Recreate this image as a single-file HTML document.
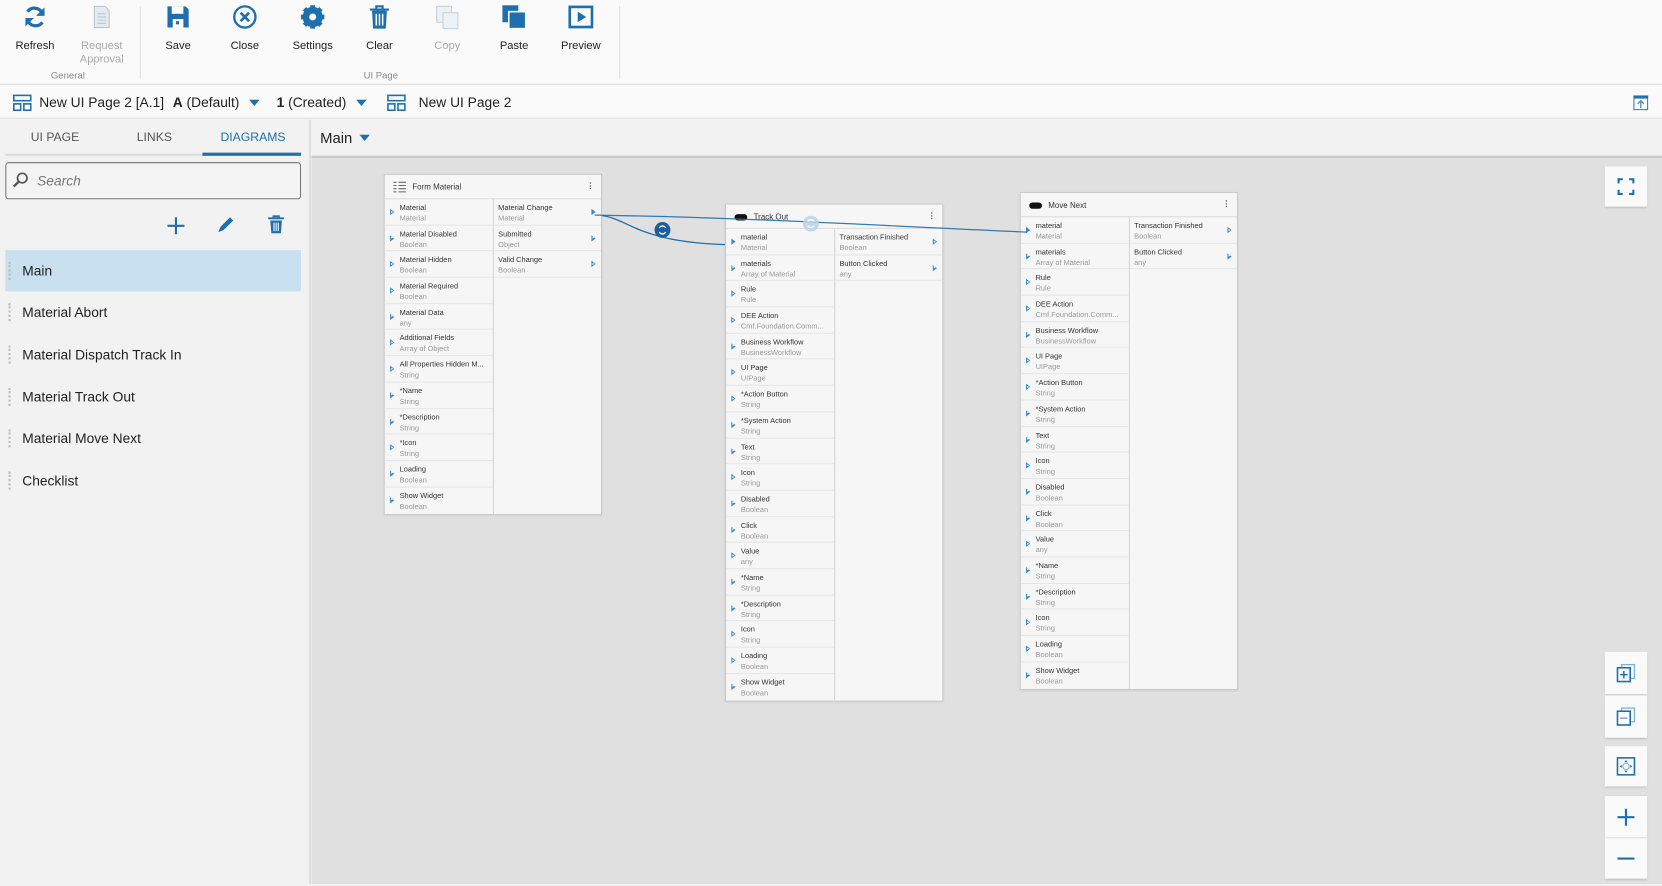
<!DOCTYPE html>
<html><head><meta charset="utf-8"><style>
*{box-sizing:border-box;margin:0;padding:0}
html,body{width:1662px;height:884px;overflow:hidden;background:#f2f2f2;font-family:"Liberation Sans",sans-serif;color:#222}
#s{position:absolute;left:0;top:0;width:1568px;height:834px;transform:scale(1.05995);transform-origin:0 0}
.a{position:absolute}
.tb{left:0;top:0;width:1568px;height:80px;background:#fafafa;border-bottom:1px solid #ddd}
.btn{position:absolute;top:4px;width:60px;text-align:center;font-size:10.5px;color:#222;line-height:13px}
.btn svg{display:block;margin:0 auto 9px;width:24px;height:24px}
.dis{color:#aaa}
.grp{position:absolute;top:66px;font-size:9px;color:#888}
.sep{position:absolute;top:6px;width:1px;height:68px;background:#e0e0e0}
.tl{left:0;top:81px;width:1568px;height:31px;background:#fafafa;border-bottom:1px solid #ddd;font-size:13px}
.tl span{position:absolute;top:8px}
.lp{left:0;top:113px;width:293px;height:721px;background:#f2f2f2;border-right:1px solid #ccc}
.tab{position:absolute;top:11px;font-size:11.5px;color:#555}
.li{position:absolute;left:5px;width:279px;height:39px;font-size:13px;padding:12px 0 0 16px;color:#222}
.li:before{content:"";position:absolute;left:3px;top:11px;width:3px;height:17px;border-left:2px dotted #bbb}
.cv{left:294px;top:147px;width:1274px;height:687px;background:#e0e0e0;border-top:2px solid #c8c8c8}
.node{position:absolute;background:#f6f6f6;border:1px solid #c9c9c9;box-shadow:0 1px 2px rgba(0,0,0,.1);font-size:7px}
.hd{height:23px;border-bottom:1px solid #ddd;position:relative;font-size:7.5px;color:#333;padding:7px 0 0 26px}
.dots{position:absolute;right:6px;top:6px;font-size:8px;font-weight:bold;color:#555}
.col{position:absolute;top:23px;bottom:0}
.lc{left:0;width:103px;border-right:1px solid #d4d4d4}
.rc{left:103px;right:0}
.r{height:24.7px;border-bottom:1px solid #e6e6e6;position:relative;padding:4px 0 0 14px;line-height:10px}
.rc .r{padding-left:4px}
.r b{font-weight:normal;color:#333;display:block;white-space:nowrap;overflow:hidden}
.r i{font-style:normal;color:#999;display:block}
.lc .r:before{content:"";position:absolute;left:5px;top:9px;border-left:4px solid #3a8ccc;border-top:3px solid transparent;border-bottom:3px solid transparent}
.lc .r:after{content:"";position:absolute;left:6px;top:10.5px;border-left:2px solid #f6f6f6;border-top:1.5px solid transparent;border-bottom:1.5px solid transparent}
.lc .r.f:after{display:none}
.rc .r:before{content:"";position:absolute;right:5px;top:9px;border-left:4px solid #3a8ccc;border-top:3px solid transparent;border-bottom:3px solid transparent}
.rc .r:after{content:"";position:absolute;right:6px;top:10.5px;border-left:2px solid #f6f6f6;border-top:1.5px solid transparent;border-bottom:1.5px solid transparent}
.rc .r.f:after{display:none}
.pill{position:absolute;left:8px;top:9px;width:12px;height:6px;border-radius:3px;background:#111}
.cb{position:absolute;width:40px;background:#fafafa;box-shadow:0 1px 2px rgba(0,0,0,.2);display:flex;align-items:center;justify-content:center}
</style></head><body><div id="s">

<div class="a tb">
 <div class="btn" style="left:3px"><svg viewBox="0 0 24 24"><path d="M19 9A8 8 0 0 0 5 7M5 15a8 8 0 0 0 14 2" fill="none" stroke="#1f6fae" stroke-width="3"/><path d="M21 3v8h-8zM3 21v-8h8z" fill="#1f6fae"/></svg>Refresh</div>
 <div class="btn dis" style="left:66px"><svg viewBox="0 0 24 24"><path d="M5 2h10l4 4v16H5z" fill="#e4eaf0" stroke="#b8c6d2"/><path d="M8 9h8M8 12h8M8 15h8M8 18h8" stroke="#b8c6d2"/></svg>Request<br>Approval</div>
 <div class="grp" style="left:48px">General</div>
 <div class="sep" style="left:132px"></div>
 <div class="btn" style="left:138px"><svg viewBox="0 0 24 24"><path d="M2 2h17l3 3v17H2z" fill="#1f6fae"/><rect x="6" y="2" width="11" height="7" fill="#fff"/><rect x="7" y="14" width="10" height="8" fill="#fff"/><rect x="10" y="16" width="3" height="3" fill="#1f6fae"/></svg>Save</div>
 <div class="btn" style="left:201px"><svg viewBox="0 0 24 24"><circle cx="12" cy="12" r="10" fill="none" stroke="#1f6fae" stroke-width="2.2"/><path d="M8 8l8 8M16 8l-8 8" stroke="#1f6fae" stroke-width="2.5"/></svg>Close</div>
 <div class="btn" style="left:265px"><svg viewBox="0 0 24 24"><circle cx="12" cy="12" r="7.5" fill="none" stroke="#1f6fae" stroke-width="4"/><path d="M12 1v22M1 12h22M4.2 4.2l15.6 15.6M19.8 4.2L4.2 19.8" stroke="#1f6fae" stroke-width="4.5"/><circle cx="12" cy="12" r="7" fill="#1f6fae"/><circle cx="12" cy="12" r="3.3" fill="#fafafa"/></svg>Settings</div>
 <div class="btn" style="left:328px"><svg viewBox="0 0 24 24"><path d="M3 5h18M9 5V2h6v3" stroke="#1f6fae" stroke-width="2" fill="none"/><path d="M5 6h14l-1 17H6z" fill="#1f6fae"/><path d="M9 9v11M12 9v11M15 9v11" stroke="#fff" stroke-width="1.4"/></svg>Clear</div>
 <div class="btn dis" style="left:392px"><svg viewBox="0 0 24 24"><rect x="2" y="2" width="14" height="15" fill="#eef2f6" stroke="#c4d0da"/><rect x="8" y="8" width="14" height="15" fill="#eef2f6" stroke="#c4d0da"/></svg>Copy</div>
 <div class="btn" style="left:455px"><svg viewBox="0 0 24 24"><rect x="1" y="1" width="15" height="16" fill="#1f6fae"/><rect x="7" y="7" width="16" height="16" fill="#1f6fae" stroke="#fafafa" stroke-width="1.5"/></svg>Paste</div>
 <div class="btn" style="left:518px"><svg viewBox="0 0 24 24"><rect x="1.5" y="2.5" width="21" height="19" fill="none" stroke="#1f6fae" stroke-width="2.5"/><path d="M9 7v10l8-5z" fill="#1f6fae"/></svg>Preview</div>
 <div class="grp" style="left:343px">UI Page</div>
 <div class="sep" style="left:584px"></div>
</div>

<div class="a tl">
 <svg class="a" style="left:12px;top:8px" width="18" height="16" viewBox="0 0 18 16"><rect x="1" y="1" width="16" height="5" fill="none" stroke="#1f6fae" stroke-width="1.5"/><rect x="1" y="9" width="6.5" height="6" fill="none" stroke="#1f6fae" stroke-width="1.5"/><rect x="10.5" y="9" width="6.5" height="6" fill="none" stroke="#1f6fae" stroke-width="1.5"/></svg>
 <span style="left:37px">New UI Page 2 [A.1]</span>
 <span style="left:163px"><b>A</b> (Default)</span>
 <svg class="a" style="left:235px;top:13px" width="10" height="6"><path d="M0 0h10L5 6z" fill="#1f6fae"/></svg>
 <span style="left:261px"><b>1</b> (Created)</span>
 <svg class="a" style="left:336px;top:13px" width="10" height="6"><path d="M0 0h10L5 6z" fill="#1f6fae"/></svg>
 <svg class="a" style="left:365px;top:8px" width="18" height="16" viewBox="0 0 18 16"><rect x="1" y="1" width="16" height="5" fill="none" stroke="#1f6fae" stroke-width="1.5"/><rect x="1" y="9" width="6.5" height="6" fill="none" stroke="#1f6fae" stroke-width="1.5"/><rect x="10.5" y="9" width="6.5" height="6" fill="none" stroke="#1f6fae" stroke-width="1.5"/></svg>
 <span style="left:395px">New UI Page 2</span>
 <svg class="a" style="left:1541px;top:9px" width="14" height="14"><rect x=".5" y=".5" width="13" height="13" fill="#fff" stroke="#1f6fae"/><rect x="0" y="0" width="14" height="3" fill="#1f6fae"/><path d="M7 5v7M4 8l3-3 3 3" stroke="#4a90d0" fill="none" stroke-width="1.3"/></svg>
</div>

<div class="a lp">
 <div class="tab" style="left:29px">UI PAGE</div>
 <div class="tab" style="left:129px">LINKS</div>
 <div class="tab" style="left:208px;color:#1f6fae">DIAGRAMS</div>
 <div class="a" style="left:5px;top:32px;width:279px;height:2px;background:#ddd"></div>
 <div class="a" style="left:191px;top:31px;width:93px;height:3px;background:#1f6fae"></div>
 <div class="a" style="left:5px;top:40px;width:279px;height:35px;border:1px solid #777;border-radius:3px;background:#f4f4f4"></div>
 <svg class="a" style="left:11px;top:49px" width="16" height="16"><circle cx="10" cy="6" r="4.5" fill="none" stroke="#555" stroke-width="1.6"/><path d="M7 9l-5 5" stroke="#555" stroke-width="2.2"/></svg>
 <div class="a" style="left:35px;top:50px;font-size:13px;font-style:italic;color:#777">Search</div>
 <svg class="a" style="left:157px;top:91px" width="18" height="18"><path d="M9 1v16M1 9h16" stroke="#1f6fae" stroke-width="2"/></svg>
 <svg class="a" style="left:204px;top:90px" width="18" height="18"><path d="M3 15l1-4 9-9 3 3-9 9z" fill="#1f6fae"/><path d="M2 16l1.5-4 2.5 2.5z" fill="#1f6fae"/></svg>
 <svg class="a" style="left:252px;top:90px" width="17" height="18"><path d="M1 3h15M6 3V1h5v2" stroke="#1f6fae" stroke-width="1.8" fill="none"/><path d="M3 5h11l-1 12H4z" fill="#1f6fae"/><path d="M6.5 7v8M8.5 7v8M10.5 7v8" stroke="#fff"/></svg>
 <div class="li" style="top:123px;background:#c8e0f0">Main</div>
 <div class="li" style="top:162px">Material Abort</div>
 <div class="li" style="top:202px">Material Dispatch Track In</div>
 <div class="li" style="top:242px">Material Track Out</div>
 <div class="li" style="top:281px">Material Move Next</div>
 <div class="li" style="top:321px">Checklist</div>
</div>

<div class="a" style="left:302px;top:122px;font-size:14px">Main</div>
<svg class="a" style="left:339px;top:127px" width="10" height="6"><path d="M0 0h10L5 6z" fill="#1f6fae"/></svg>

<div class="a cv">
 <svg class="a" style="left:0;top:0" width="1274" height="687">
  <path d="M267 54 C300 54 300 80 397 82" fill="none" stroke="#1f6fae" stroke-width="1.2"/>
  <circle cx="331" cy="68" r="7.5" fill="#1a5f9a"/>
  <path d="M328 66a3.5 3.5 0 0 1 6 0M334 70a3.5 3.5 0 0 1-6 0" stroke="#fff" fill="none" stroke-width="1.3"/>
 </svg>

 <div class="node" style="left:68px;top:15px;width:206px;height:322px">
  <div class="hd"><svg class="a" style="left:8px;top:6px" width="12" height="11"><path d="M0 1h3M5 1h7M0 4h3M5 4h7M0 7h3M5 7h7M0 10h3M5 10h7" stroke="#666"/></svg>Form Material<span class="dots">⋮</span></div>
  <div class="col lc">
   <div class="r"><b>Material</b><i>Material</i></div>
   <div class="r"><b>Material Disabled</b><i>Boolean</i></div>
   <div class="r"><b>Material Hidden</b><i>Boolean</i></div>
   <div class="r"><b>Material Required</b><i>Boolean</i></div>
   <div class="r"><b>Material Data</b><i>any</i></div>
   <div class="r"><b>Additional Fields</b><i>Array of Object</i></div>
   <div class="r"><b>All Properties Hidden M...</b><i>String</i></div>
   <div class="r"><b>*Name</b><i>String</i></div>
   <div class="r"><b>*Description</b><i>String</i></div>
   <div class="r"><b>*Icon</b><i>String</i></div>
   <div class="r"><b>Loading</b><i>Boolean</i></div>
   <div class="r" style="border:0"><b>Show Widget</b><i>Boolean</i></div>
  </div>
  <div class="col rc">
   <div class="r f"><b>Material Change</b><i>Material</i></div>
   <div class="r"><b>Submitted</b><i>Object</i></div>
   <div class="r"><b>Valid Change</b><i>Boolean</i></div>
  </div>
 </div>

 <div class="node" style="left:390px;top:43px;width:206px;height:470px">
  <div class="hd"><span class="pill"></span>Track Out<span class="dots">⋮</span></div>
  <div class="col lc">
   <div class="r f"><b>material</b><i>Material</i></div>
   <div class="r"><b>materials</b><i>Array of Material</i></div>
   <div class="r"><b>Rule</b><i>Rule</i></div>
   <div class="r"><b>DEE Action</b><i>Cmf.Foundation.Comm...</i></div>
   <div class="r"><b>Business Workflow</b><i>BusinessWorkflow</i></div>
   <div class="r"><b>UI Page</b><i>UIPage</i></div>
   <div class="r"><b>*Action Button</b><i>String</i></div>
   <div class="r"><b>*System Action</b><i>String</i></div>
   <div class="r"><b>Text</b><i>String</i></div>
   <div class="r"><b>Icon</b><i>String</i></div>
   <div class="r"><b>Disabled</b><i>Boolean</i></div>
   <div class="r"><b>Click</b><i>Boolean</i></div>
   <div class="r"><b>Value</b><i>any</i></div>
   <div class="r"><b>*Name</b><i>String</i></div>
   <div class="r"><b>*Description</b><i>String</i></div>
   <div class="r"><b>Icon</b><i>String</i></div>
   <div class="r"><b>Loading</b><i>Boolean</i></div>
   <div class="r" style="border:0"><b>Show Widget</b><i>Boolean</i></div>
  </div>
  <div class="col rc">
   <div class="r"><b>Transaction Finished</b><i>Boolean</i></div>
   <div class="r"><b>Button Clicked</b><i>any</i></div>
  </div>
 </div>

 <div class="node" style="left:668px;top:32px;width:206px;height:470px">
  <div class="hd"><span class="pill"></span>Move Next<span class="dots">⋮</span></div>
  <div class="col lc">
   <div class="r f"><b>material</b><i>Material</i></div>
   <div class="r"><b>materials</b><i>Array of Material</i></div>
   <div class="r"><b>Rule</b><i>Rule</i></div>
   <div class="r"><b>DEE Action</b><i>Cmf.Foundation.Comm...</i></div>
   <div class="r"><b>Business Workflow</b><i>BusinessWorkflow</i></div>
   <div class="r"><b>UI Page</b><i>UIPage</i></div>
   <div class="r"><b>*Action Button</b><i>String</i></div>
   <div class="r"><b>*System Action</b><i>String</i></div>
   <div class="r"><b>Text</b><i>String</i></div>
   <div class="r"><b>Icon</b><i>String</i></div>
   <div class="r"><b>Disabled</b><i>Boolean</i></div>
   <div class="r"><b>Click</b><i>Boolean</i></div>
   <div class="r"><b>Value</b><i>any</i></div>
   <div class="r"><b>*Name</b><i>String</i></div>
   <div class="r"><b>*Description</b><i>String</i></div>
   <div class="r"><b>Icon</b><i>String</i></div>
   <div class="r"><b>Loading</b><i>Boolean</i></div>
   <div class="r" style="border:0"><b>Show Widget</b><i>Boolean</i></div>
  </div>
  <div class="col rc">
   <div class="r"><b>Transaction Finished</b><i>Boolean</i></div>
   <div class="r"><b>Button Clicked</b><i>any</i></div>
  </div>
 </div>

 <svg class="a" style="left:0;top:0;pointer-events:none" width="1274" height="687">
  <path d="M267 54 C400 56 500 62 675 70" fill="none" stroke="#1f6fae" stroke-width="1.2" opacity=".9"/>
  <circle cx="471" cy="62" r="7.5" fill="#b8d4e8" opacity=".85"/>
  <path d="M468 60a3.5 3.5 0 0 1 6 0M474 64a3.5 3.5 0 0 1-6 0" stroke="#fff" fill="none" stroke-width="1.3"/>
 </svg>

 <div class="cb" style="left:1220px;top:8px;height:38px"><svg width="16" height="16"><path d="M1 5V1h4M11 1h4v4M15 11v4h-4M5 15H1v-4" fill="none" stroke="#1f6fae" stroke-width="2"/></svg></div>
 <div class="cb" style="left:1220px;top:466px;height:40px"><svg width="18" height="18"><rect x="5" y="1" width="12" height="13" fill="none" stroke="#7ab0dc" stroke-width="1.2"/><rect x="1" y="4" width="12" height="13" fill="#fafafa" stroke="#1f6fae" stroke-width="1.5"/><path d="M7 7v7M3.5 10.5h7" stroke="#1f6fae" stroke-width="1.4"/></svg></div>
 <div class="cb" style="left:1220px;top:507px;height:40px"><svg width="18" height="18"><rect x="5" y="1" width="12" height="13" fill="none" stroke="#7ab0dc" stroke-width="1.2"/><rect x="1" y="4" width="12" height="13" fill="#fafafa" stroke="#1f6fae" stroke-width="1.5"/><path d="M3.5 10.5h7" stroke="#8aaac4" stroke-width="1.4"/></svg></div>
 <div class="cb" style="left:1220px;top:555px;height:38px"><svg width="18" height="18"><rect x="1" y="1" width="16" height="16" fill="none" stroke="#1f6fae" stroke-width="1.5"/><circle cx="9" cy="9" r="3" fill="none" stroke="#7ab0dc"/><path d="M9 3l-1.5 2h3zM9 15l-1.5-2h3zM3 9l2-1.5v3zM15 9l-2-1.5v3z" fill="#1f6fae"/></svg></div>
 <div class="cb" style="left:1220px;top:602px;height:39px"><svg width="18" height="18"><path d="M9 1v16M1 9h16" stroke="#1f6fae" stroke-width="2"/></svg></div>
 <div class="cb" style="left:1220px;top:641px;height:39px;border-top:1px solid #e4e4e4"><svg width="18" height="4"><path d="M1 2h16" stroke="#1f6fae" stroke-width="2"/></svg></div>
</div>

</div></body></html>
